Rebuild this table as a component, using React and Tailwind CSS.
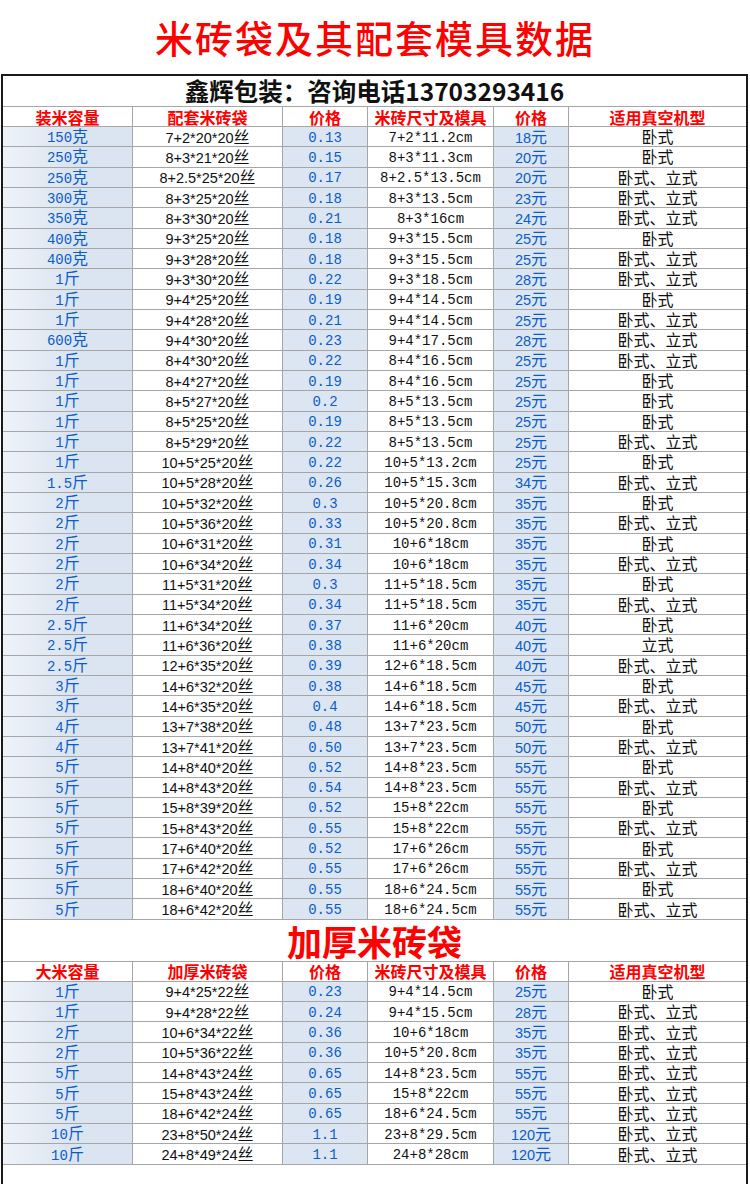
import React from 'react';

const CJK = '"Noto Sans CJK SC", "Noto Sans", sans-serif';
const MONO = '"Liberation Mono", "DejaVu Sans Mono", monospace';
const SANS = '"Liberation Sans", Arial, sans-serif';

const mainRows = [
  ['150克', '7+2*20*20丝', '0.13', '7+2*11.2cm', '18元', '卧式'],
  ['250克', '8+3*21*20丝', '0.15', '8+3*11.3cm', '20元', '卧式'],
  ['250克', '8+2.5*25*20丝', '0.17', '8+2.5*13.5cm', '20元', '卧式、立式'],
  ['300克', '8+3*25*20丝', '0.18', '8+3*13.5cm', '23元', '卧式、立式'],
  ['350克', '8+3*30*20丝', '0.21', '8+3*16cm', '24元', '卧式、立式'],
  ['400克', '9+3*25*20丝', '0.18', '9+3*15.5cm', '25元', '卧式'],
  ['400克', '9+3*28*20丝', '0.18', '9+3*15.5cm', '25元', '卧式、立式'],
  ['1斤', '9+3*30*20丝', '0.22', '9+3*18.5cm', '28元', '卧式、立式'],
  ['1斤', '9+4*25*20丝', '0.19', '9+4*14.5cm', '25元', '卧式'],
  ['1斤', '9+4*28*20丝', '0.21', '9+4*14.5cm', '25元', '卧式、立式'],
  ['600克', '9+4*30*20丝', '0.23', '9+4*17.5cm', '28元', '卧式、立式'],
  ['1斤', '8+4*30*20丝', '0.22', '8+4*16.5cm', '25元', '卧式、立式'],
  ['1斤', '8+4*27*20丝', '0.19', '8+4*16.5cm', '25元', '卧式'],
  ['1斤', '8+5*27*20丝', '0.2', '8+5*13.5cm', '25元', '卧式'],
  ['1斤', '8+5*25*20丝', '0.19', '8+5*13.5cm', '25元', '卧式'],
  ['1斤', '8+5*29*20丝', '0.22', '8+5*13.5cm', '25元', '卧式、立式'],
  ['1斤', '10+5*25*20丝', '0.22', '10+5*13.2cm', '25元', '卧式'],
  ['1.5斤', '10+5*28*20丝', '0.26', '10+5*15.3cm', '34元', '卧式、立式'],
  ['2斤', '10+5*32*20丝', '0.3', '10+5*20.8cm', '35元', '卧式'],
  ['2斤', '10+5*36*20丝', '0.33', '10+5*20.8cm', '35元', '卧式、立式'],
  ['2斤', '10+6*31*20丝', '0.31', '10+6*18cm', '35元', '卧式'],
  ['2斤', '10+6*34*20丝', '0.34', '10+6*18cm', '35元', '卧式、立式'],
  ['2斤', '11+5*31*20丝', '0.3', '11+5*18.5cm', '35元', '卧式'],
  ['2斤', '11+5*34*20丝', '0.34', '11+5*18.5cm', '35元', '卧式、立式'],
  ['2.5斤', '11+6*34*20丝', '0.37', '11+6*20cm', '40元', '卧式'],
  ['2.5斤', '11+6*36*20丝', '0.38', '11+6*20cm', '40元', '立式'],
  ['2.5斤', '12+6*35*20丝', '0.39', '12+6*18.5cm', '40元', '卧式、立式'],
  ['3斤', '14+6*32*20丝', '0.38', '14+6*18.5cm', '45元', '卧式'],
  ['3斤', '14+6*35*20丝', '0.4', '14+6*18.5cm', '45元', '卧式、立式'],
  ['4斤', '13+7*38*20丝', '0.48', '13+7*23.5cm', '50元', '卧式'],
  ['4斤', '13+7*41*20丝', '0.50', '13+7*23.5cm', '50元', '卧式、立式'],
  ['5斤', '14+8*40*20丝', '0.52', '14+8*23.5cm', '55元', '卧式'],
  ['5斤', '14+8*43*20丝', '0.54', '14+8*23.5cm', '55元', '卧式、立式'],
  ['5斤', '15+8*39*20丝', '0.52', '15+8*22cm', '55元', '卧式'],
  ['5斤', '15+8*43*20丝', '0.55', '15+8*22cm', '55元', '卧式、立式'],
  ['5斤', '17+6*40*20丝', '0.52', '17+6*26cm', '55元', '卧式'],
  ['5斤', '17+6*42*20丝', '0.55', '17+6*26cm', '55元', '卧式、立式'],
  ['5斤', '18+6*40*20丝', '0.55', '18+6*24.5cm', '55元', '卧式'],
  ['5斤', '18+6*42*20丝', '0.55', '18+6*24.5cm', '55元', '卧式、立式'],
];

const thickRows = [
  ['1斤', '9+4*25*22丝', '0.23', '9+4*14.5cm', '25元', '卧式'],
  ['1斤', '9+4*28*22丝', '0.24', '9+4*15.5cm', '28元', '卧式、立式'],
  ['2斤', '10+6*34*22丝', '0.36', '10+6*18cm', '35元', '卧式、立式'],
  ['2斤', '10+5*36*22丝', '0.36', '10+5*20.8cm', '35元', '卧式、立式'],
  ['5斤', '14+8*43*24丝', '0.65', '14+8*23.5cm', '55元', '卧式、立式'],
  ['5斤', '15+8*43*24丝', '0.65', '15+8*22cm', '55元', '卧式、立式'],
  ['5斤', '18+6*42*24丝', '0.65', '18+6*24.5cm', '55元', '卧式、立式'],
  ['10斤', '23+8*50*24丝', '1.1', '23+8*29.5cm', '120元', '卧式、立式'],
  ['10斤', '24+8*49*24丝', '1.1', '24+8*28cm', '120元', '卧式、立式'],
];

// latin font + size per column; CJK parts always 16px Noto
const latin = [
  { fontFamily: MONO, fontSize: '14px' },
  { fontFamily: SANS, fontSize: '14.5px' },
  { fontFamily: MONO, fontSize: '14px' },
  { fontFamily: MONO, fontSize: '14px' },
  { fontFamily: SANS, fontSize: '14.5px' },
  { fontFamily: SANS, fontSize: '14.5px' },
];

const Mixed = ({ text, col }) => {
  const parts = text.split(/([\u3001\u4e00-\u9fff]+)/).filter(Boolean);
  return (
    <span className="leading-[16px]">
      {parts.map((p, i) =>
        /[\u3001\u4e00-\u9fff]/.test(p) ? (
          <span key={i} className="text-[16px]" style={{ fontFamily: CJK }}>{p}</span>
        ) : (
          <span key={i} style={latin[col]}>{p}</span>
        )
      )}
    </span>
  );
};

const grid = 'grid grid-cols-[130px_150px_85px_126px_75px_177px]';
const blueBg = ['bg-linear-to-r from-[#eef3f9] via-[#dbe5f1] to-[#dbe5f1]', '', 'bg-[#dce6f2]', '', 'bg-[#dce6f2]', ''];

const HeaderRow = ({ labels }) => (
  <div className={`${grid} h-[20px] border-b border-[#a6a6a6]`}>
    {labels.map((l, i) => (
      <div
        key={i}
        className={`flex items-center justify-center text-[16px] font-bold text-[#ff0000] leading-[16px] ${i < 5 ? 'border-r border-[#a6a6a6]' : ''}`}
        style={{ fontFamily: CJK }}
      >
        {l}
      </div>
    ))}
  </div>
);

const DataRow = ({ row }) => (
  <div className={`${grid} h-[20.33px] border-b border-[#a6a6a6]`}>
    {row.map((cell, i) => (
      <div
        key={i}
        className={`flex items-center justify-center whitespace-nowrap ${blueBg[i]} ${i < 5 ? 'border-r border-[#a6a6a6]' : ''} ${i === 0 || i === 2 || i === 4 ? 'text-[#0b5cc9]' : 'text-[#111]'}`}
      >
        <Mixed text={cell} col={i} />
      </div>
    ))}
  </div>
);

export default function App() {
  return (
    <div className="w-[750px] h-[1184px] bg-white flex flex-col overflow-hidden">
      <div className="h-[74px] flex items-center justify-center">
        <h1 className="text-[38px] font-medium text-[#ff0000] tracking-[2px] leading-none pb-[1px]" style={{ fontFamily: CJK }}>
          米砖袋及其配套模具数据
        </h1>
      </div>

      <div className="flex-1 ml-[1px] w-[747px] border-x-2 border-t-2 border-[#1a1a1a]">
        <div className="h-[31px] flex items-center justify-center border-b border-[#a6a6a6]">
          <span className="text-[24.5px] font-bold text-[#111] leading-none" style={{ fontFamily: CJK }}>
            鑫辉包装：咨询电话13703293416
          </span>
        </div>
        <HeaderRow labels={['装米容量', '配套米砖袋', '价格', '米砖尺寸及模具', '价格', '适用真空机型']} />
        {mainRows.map((r, i) => (
          <DataRow key={i} row={r} />
        ))}

        <div className="h-[42px] flex items-center justify-center border-b border-[#a6a6a6]">
          <span className="text-[35px] font-bold text-[#ff0000] leading-none" style={{ fontFamily: CJK }}>
            加厚米砖袋
          </span>
        </div>
        <HeaderRow labels={['大米容量', '加厚米砖袋', '价格', '米砖尺寸及模具', '价格', '适用真空机型']} />
        {thickRows.map((r, i) => (
          <DataRow key={i} row={r} />
        ))}
      </div>
    </div>
  );
}
